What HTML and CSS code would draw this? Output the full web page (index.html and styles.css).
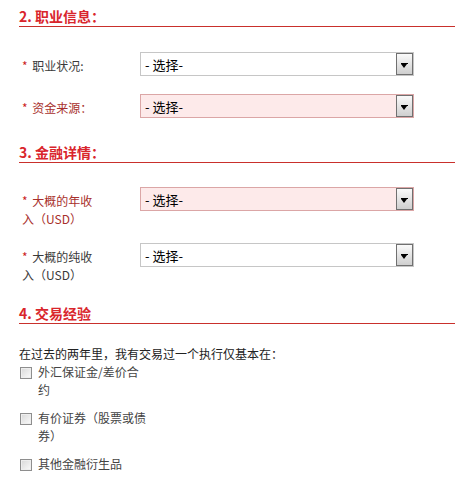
FILE: index.html
```html
<!DOCTYPE html>
<html lang="zh-CN">
<head>
    <meta charset="UTF-8">
    <meta name="viewport" content="width=device-width, initial-scale=1.0">
    <title>开户申请</title>
    <link rel="stylesheet" href="styles.css">
</head>
<body>

    <div class="form-wrap">
        <!-- 职业信息 -->
        <h3 class="section-title">2. 职业信息：</h3>
        <div class="field">
            <label class="field-label"><span class="req">*</span> 职业状况:</label>
            <div class="select-box">
                <select><option>- 选择-</option></select>
                <span class="arrow"></span>
            </div>
        </div>
        <div class="field has-error">
            <label class="field-label"><span class="req">*</span> 资金来源：</label>
            <div class="select-box">
                <select><option>- 选择-</option></select>
                <span class="arrow"></span>
            </div>
        </div>

        <!-- 金融详情 -->
        <h3 class="section-title">3. 金融详情：</h3>
        <div class="field field-tall has-error">
            <label class="field-label"><span class="req">*</span> 大概的年收入（USD）</label>
            <div class="select-box">
                <select><option>- 选择-</option></select>
                <span class="arrow"></span>
            </div>
        </div>
        <div class="field">
            <label class="field-label"><span class="req">*</span> 大概的纯收入（USD）</label>
            <div class="select-box">
                <select><option>- 选择-</option></select>
                <span class="arrow"></span>
            </div>
        </div>

        <!-- 交易经验 -->
        <h3 class="section-title title-last">4. 交易经验</h3>
        <p class="intro">在过去的两年里，我有交易过一个执行仅基本在：</p>
        <label class="check-item">
            <input type="checkbox">
            <span>外汇保证金/差价合约</span>
        </label>
        <label class="check-item">
            <input type="checkbox">
            <span>有价证券（股票或债券）</span>
        </label>
        <label class="check-item">
            <input type="checkbox">
            <span>其他金融衍生品</span>
        </label>
    </div>

</body>
</html>
```

FILE: styles.css
```css
body {
    margin: 0;
    padding: 7px 0 0 19px;
    font-family: "Noto Sans CJK SC", sans-serif;
    font-size: 12px;
    color: #333;
    background: #fff;
}

.form-wrap {
    width: 436px;
}

.section-title {
    margin: 25px 0 24px;
    padding-bottom: 1px;
    font-size: 14px;
    line-height: 18px;
    font-weight: bold;
    color: #d9252c;
    border-bottom: 1px solid #c9302c;
}

.section-title:first-child {
    margin-top: 0;
    margin-bottom: 25px;
}

.title-last {
    margin-top: 20px;
    margin-bottom: 21px;
}

.field {
    display: flex;
    align-items: flex-start;
    margin-bottom: 18px;
}

.field-tall {
    margin-bottom: 15px;
}

.field-label {
    width: 76px;
    margin: 0 42px 0 3px;
    padding-top: 5px;
    line-height: 18px;
    color: #3a3a3a;
}

.req {
    color: #cc1f1f;
    margin-right: 2px;
}

.has-error .field-label {
    color: #a8302c;
}

.select-box {
    position: relative;
    width: 274px;
    height: 24px;
}

.select-box select {
    appearance: none;
    -webkit-appearance: none;
    width: 100%;
    height: 100%;
    margin: 0;
    padding: 0 0 0 4px;
    font-family: "Noto Sans CJK SC", sans-serif;
    font-size: 13px;
    color: #000;
    background: #fff;
    border: 1px solid #c6c6c6;
    border-radius: 0;
    outline: none;
}

.has-error .select-box select {
    background: #fdeaea;
    border-color: #dba6a6;
}

.arrow {
    position: absolute;
    top: 1px;
    right: 1px;
    bottom: 1px;
    width: 15px;
    border: 1px solid #707070;
    background: linear-gradient(#fafafa, #cfcfcf);
    pointer-events: none;
}

.arrow::before {
    content: "";
    position: absolute;
    left: 4px;
    top: 9px;
    width: 7px;
    height: 1px;
    background: #000;
}

.arrow::after {
    content: "";
    position: absolute;
    left: 4px;
    top: 10px;
    border-left: 3.5px solid transparent;
    border-right: 3.5px solid transparent;
    border-top: 4px solid #000;
}

.intro {
    margin: 0;
    line-height: 18px;
    color: #222;
}

.check-item {
    display: flex;
    align-items: flex-start;
    margin-bottom: 10px;
    line-height: 18px;
    color: #444;
}

.check-item input {
    appearance: none;
    -webkit-appearance: none;
    flex: none;
    width: 12px;
    height: 12px;
    margin: 4px 6px 0 1px;
    border: 1px solid #8e8e8e;
    background: linear-gradient(135deg, #d8d8d8, #fbfbfb);
    box-shadow: inset 0 0 0 1px #eee;
}

.check-item span {
    width: 110px;
}
```
